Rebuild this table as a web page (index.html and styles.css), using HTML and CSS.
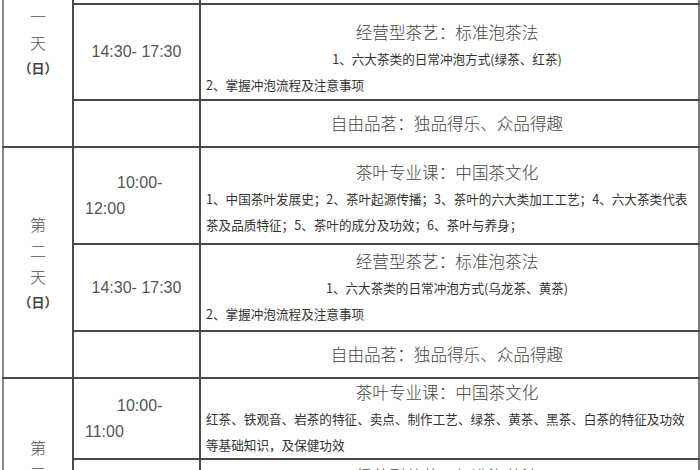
FILE: index.html
```html
<!DOCTYPE html>
<html lang="zh-CN">
<head>
<meta charset="utf-8">
<title>茶艺课程安排</title>
<link rel="stylesheet" href="styles.css">
</head>
<body>
<table class="schedule">
  <colgroup>
    <col class="col-day">
    <col class="col-time">
    <col class="col-content">
  </colgroup>
  <tbody>
    <tr class="row-lead">
      <td class="day" rowspan="3">
        <span class="day-char">第</span>
        <span class="day-char">一</span>
        <span class="day-char">天</span>
        <span class="day-note">（日）</span>
      </td>
      <td class="time time-wrap">10:00-12:00</td>
      <td class="content">
        <div class="title">茶叶专业课：中国茶文化</div>
        <div class="detail">1、中国茶叶发展史；2、茶叶起源传播；3、茶叶的六大类加工工艺；4、六大茶类代表茶及品质特征；5、茶叶的成分及功效；6、茶叶与养身；</div>
      </td>
    </tr>
    <tr class="row-afternoon-first">
      <td class="time">14:30- 17:30</td>
      <td class="content content-low">
        <div class="title">经营型茶艺：标准泡茶法</div>
        <div class="detail detail-center">1、六大茶类的日常冲泡方式(绿茶、红茶)</div>
        <div class="detail">2、掌握冲泡流程及注意事项</div>
      </td>
    </tr>
    <tr class="row-free">
      <td class="time"></td>
      <td class="content"><div class="title">自由品茗：独品得乐、众品得趣</div></td>
    </tr>

    <tr class="row-morning">
      <td class="day" rowspan="3">
        <span class="day-char">第</span>
        <span class="day-char">二</span>
        <span class="day-char">天</span>
        <span class="day-note">（日）</span>
      </td>
      <td class="time time-wrap">10:00-12:00</td>
      <td class="content content-nudge">
        <div class="title">茶叶专业课：中国茶文化</div>
        <div class="detail">1、中国茶叶发展史；2、茶叶起源传播；3、茶叶的六大类加工工艺；4、六大茶类代表茶及品质特征；5、茶叶的成分及功效；6、茶叶与养身；</div>
      </td>
    </tr>
    <tr class="row-afternoon">
      <td class="time">14:30- 17:30</td>
      <td class="content">
        <div class="title">经营型茶艺：标准泡茶法</div>
        <div class="detail detail-center">1、六大茶类的日常冲泡方式(乌龙茶、黄茶)</div>
        <div class="detail">2、掌握冲泡流程及注意事项</div>
      </td>
    </tr>
    <tr class="row-free">
      <td class="time"></td>
      <td class="content"><div class="title">自由品茗：独品得乐、众品得趣</div></td>
    </tr>

    <tr class="row-short">
      <td class="day" rowspan="3">
        <span class="day-char">第</span>
        <span class="day-char">三</span>
        <span class="day-char">天</span>
        <span class="day-note">（日）</span>
      </td>
      <td class="time time-wrap">10:00-11:00</td>
      <td class="content">
        <div class="title">茶叶专业课：中国茶文化</div>
        <div class="detail">红茶、铁观音、岩茶的特征、卖点、制作工艺、绿茶、黄茶、黑茶、白茶的特征及功效等基础知识，及保健功效</div>
      </td>
    </tr>
    <tr class="row-afternoon">
      <td class="time">14:30- 17:30</td>
      <td class="content">
        <div class="title">经营型茶艺：标准泡茶法</div>
        <div class="detail detail-center">1、六大茶类的日常冲泡方式(白茶、黑茶)</div>
        <div class="detail">2、掌握冲泡流程及注意事项</div>
      </td>
    </tr>
    <tr class="row-free">
      <td class="time"></td>
      <td class="content"><div class="title">自由品茗：独品得乐、众品得趣</div></td>
    </tr>
  </tbody>
</table>
</body>
</html>
```

FILE: styles.css
```css
html, body {
  margin: 0;
  padding: 0;
  background: #ffffff;
  overflow: hidden;
}

body {
  font-family: "Noto Sans CJK SC", "Liberation Sans", sans-serif;
  color: #444444;
}

.schedule {
  border-collapse: collapse;
  table-layout: fixed;
  width: 696px;
  margin: -90px 0 0 2px;
}

.col-day { width: 70px; }
.col-time { width: 127px; }
.col-content { width: 499px; }

.schedule td {
  border: 2px solid #4a4a4a;
  padding: 0;
  vertical-align: middle;
}

.schedule td.day {
  border-left-color: #8a8a8a;
  text-align: center;
  color: #555555;
}

.schedule td.content {
  border-right-color: #7a7a7a;
  padding: 0 10px 0 5px;
}

.row-lead { height: 93px; }
.row-morning { height: 97px; }
.row-afternoon-first { height: 96px; }
.row-afternoon { height: 87px; }
.row-free { height: 47px; }
.row-short { height: 80px; }

.day-char {
  display: block;
  font-size: 16px;
  font-weight: 300;
  line-height: 26px;
}

.day-note {
  display: block;
  font-size: 13px;
  font-weight: bold;
  line-height: 26px;
  color: #444444;
}

.time {
  font-family: "Liberation Sans", Arial, sans-serif;
  font-size: 16px;
  line-height: 26px;
  color: #555555;
  text-align: center;
}

.time-wrap {
  text-align: left;
  padding-left: 11px !important;
  text-indent: 32px;
}

.title {
  font-size: 16.6px;
  font-weight: 300;
  line-height: 27px;
  text-align: center;
  color: #444444;
}

.detail {
  font-size: 12.6px;
  line-height: 26px;
  color: #333333;
}

.detail-center {
  text-align: center;
}

.content-low {
  padding-top: 13px !important;
}

.content-nudge {
  padding-top: 5px !important;
}
```
